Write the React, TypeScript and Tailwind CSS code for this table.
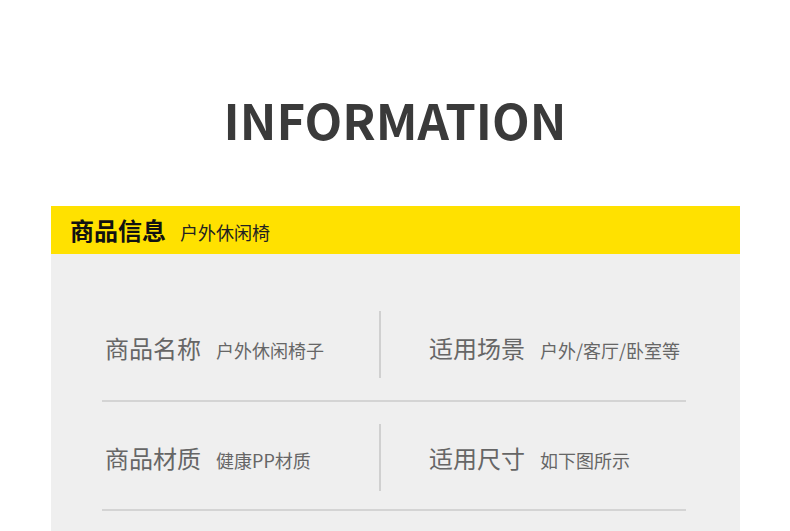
const rows = [
  [
    ["商品名称", "户外休闲椅子"],
    ["适用场景", "户外/客厅/卧室等"]
  ],
  [
    ["商品材质", "健康PP材质"],
    ["适用尺寸", "如下图所示"]
  ]
] as const;

function Cell({ label, value }: { label: string; value: string }) {
  return (
    <div className="flex items-baseline">
      <span className="text-[24px] leading-none text-[#666]">{label}</span>
      <span className="ml-[15px] text-[18px] leading-none text-[#666]">{value}</span>
    </div>
  );
}

export default function App() {
  return (
    <div
      className="h-[531px] w-[790px] overflow-hidden bg-white"
      style={{ fontFamily: '"Noto Sans CJK SC", "Noto Sans", sans-serif' }}
    >
      <div className="flex h-[206px] justify-center pt-[84px]">
        <h1 className="text-[49px] font-bold leading-[70px] text-[#3a3a3a]">INFORMATION</h1>
      </div>
      <div className="ml-[51px] w-[689px]">
        <div className="flex h-[48px] items-center bg-[#ffe100] px-[19px]">
          <span className="text-[24px] font-bold text-[#111]">商品信息</span>
          <span className="ml-[14px] mt-[4px] text-[18px] text-[#222]">户外休闲椅</span>
        </div>
        <div className="h-[300px] bg-[#efefef] pl-[51px] pr-[54px] pt-[57px]">
          {rows.map((row, i) => (
            <div
              key={i}
              className={`border-b-2 border-[#d4d4d4] ${i === 0 ? "mb-[22px] pb-[22px]" : "pb-[18px]"}`}
            >
              <div className="flex h-[67px] items-center">
                <div className={`flex w-[277px] items-center pl-[3px] ${i === 0 ? "mt-[6px]" : ""}`}>
                  <Cell label={row[0][0]} value={row[0][1]} />
                </div>
                <div className="h-full w-[2px] bg-[#d0d0d0]" />
                <div className={`flex items-center pl-[48px] ${i === 0 ? "mt-[6px]" : ""}`}>
                  <Cell label={row[1][0]} value={row[1][1]} />
                </div>
              </div>
            </div>
          ))}
        </div>
      </div>
    </div>
  );
}
